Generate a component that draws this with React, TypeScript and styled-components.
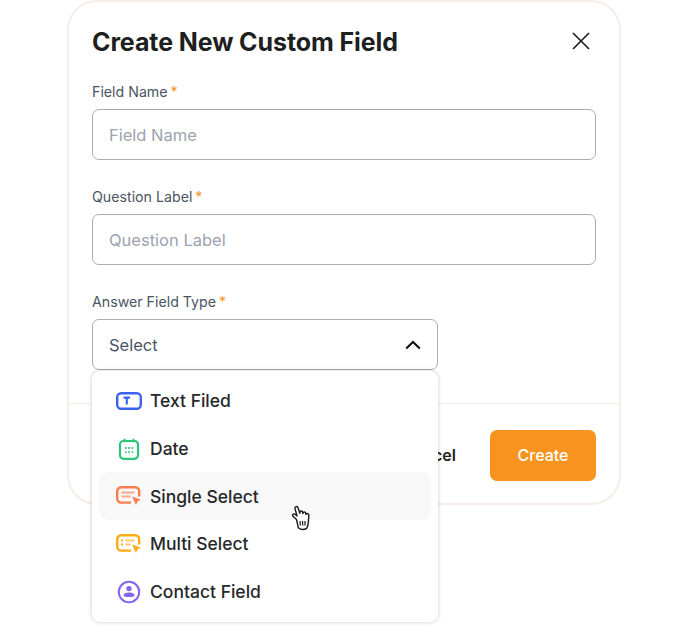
import React from 'react';
import styled, { createGlobalStyle } from 'styled-components';

const GlobalStyle = createGlobalStyle`
  html, body {
    margin: 0;
    padding: 0;
    background: #ffffff;
  }
  * {
    box-sizing: border-box;
  }
  body {
    font-family: "Inter", "Noto Sans", sans-serif;
  }
`;

const Page = styled.div`
  width: 688px;
  height: 635px;
  padding-left: 67px;
  overflow: hidden;
`;

const Modal = styled.div`
  width: 554px;
  height: 505px;
  background: #ffffff;
  border: 2px solid #f6ede5;
  border-radius: 30px;
`;

const Body = styled.div`
  padding: 0 23px 33px;
`;

const Header = styled.div`
  height: 79px;
  display: flex;
  align-items: center;
  justify-content: space-between;
`;

const Title = styled.h1`
  margin: 0;
  font-family: "Inter", sans-serif;
  font-size: 25px;
  font-weight: 700;
  letter-spacing: -0.1px;
  color: #1e1f21;
`;

const CloseButton = styled.button`
  width: 20px;
  height: 20px;
  margin: 0 5px 2px 0;
  padding: 0;
  border: none;
  background: none;
  display: flex;
`;

const Field = styled.div<{ $width?: number }>`
  position: relative;
  width: ${p => (p.$width ? `${p.$width}px` : '100%')};
  margin-bottom: 26px;

  &:last-child {
    margin-bottom: 0;
  }
`;

const Label = styled.label`
  display: block;
  height: 20px;
  margin-bottom: 8px;
  font-size: 14.2px;
  line-height: 21px;
  font-weight: 400;
  color: #4b5563;
`;

const Star = styled.span`
  margin-left: 3px;
  color: #f7931e;
`;

const Input = styled.input`
  display: block;
  width: 100%;
  height: 51px;
  padding: 0 16px;
  border: 1.5px solid #a9adb3;
  border-radius: 7px;
  font-family: inherit;
  font-size: 16.5px;
  outline: none;

  &::placeholder {
    color: #9ca3af;
  }
`;

const SelectBox = styled.div`
  height: 51px;
  padding: 0 16px;
  border: 1.5px solid #a9adb3;
  border-radius: 7px;
  display: flex;
  align-items: center;
  justify-content: space-between;
  font-size: 16.5px;
  color: #4b5563;
`;

const Menu = styled.ul`
  position: absolute;
  top: 80px;
  left: 0;
  width: 100%;
  height: 251px;
  margin: 0;
  padding: 6px 7px;
  list-style: none;
  background: #ffffff;
  border-radius: 8px;
  box-shadow: 0 0 4px rgba(0, 0, 0, 0.22);
`;

const MenuItem = styled.li<{ $active?: boolean }>`
  height: 47.7px;
  padding-left: 17px;
  display: flex;
  align-items: center;
  gap: 8px;
  border-radius: 9px;
  font-size: 17.5px;
  font-weight: 500;
  color: #26282b;
  background: ${p => (p.$active ? '#f8f8f8' : 'transparent')};
`;

const Footer = styled.div`
  padding: 26px 23px 22px;
  border-top: 1.5px solid #f6ede5;
  display: flex;
  justify-content: flex-end;
  align-items: center;
  gap: 34px;
`;

const CancelButton = styled.button`
  padding: 0 0 2px;
  border: none;
  background: none;
  font-family: inherit;
  font-size: 16px;
  font-weight: 600;
  color: #1e1f21;
`;

const CreateButton = styled.button`
  width: 106px;
  height: 51px;
  padding-bottom: 3px;
  border: none;
  border-radius: 7px;
  background: #f7931e;
  color: #ffffff;
  font-family: inherit;
  font-size: 16px;
  font-weight: 500;
`;

const Cursor = styled.svg`
  position: absolute;
  left: 199px;
  top: 134px;
`;

const TextIcon = () => (
  <svg width="26" height="18" viewBox="0 0 26 18" fill="none">
    <rect x="1.2" y="1.2" width="23.6" height="15.6" rx="4" stroke="#3b63f3" strokeWidth="2.4" />
    <path d="M7.5 5.6h6.6M10.8 5.6v7" stroke="#3b63f3" strokeWidth="2.1" />
  </svg>
);

const DateIcon = () => (
  <svg width="26" height="22" viewBox="0 0 26 22" fill="none">
    <rect x="4" y="3" width="18" height="17.8" rx="3.5" stroke="#2fc47e" strokeWidth="2.2" />
    <path d="M8.5 0.8v3.4M17.5 0.8v3.4" stroke="#2fc47e" strokeWidth="2" />
    <path d="M9 10h1.6M12.3 10h1.6M15.6 10h1.6M9 14.2h1.6M12.3 14.2h1.6M15.6 14.2h1.6" stroke="#2fc47e" strokeWidth="1.8" />
  </svg>
);

const SingleSelectIcon = () => (
  <svg width="26" height="20" viewBox="0 0 26 20" fill="none">
    <path d="M15 16.6H5.2a4 4 0 0 1-4-4V5.2a4 4 0 0 1 4-4h14a4 4 0 0 1 4 4v5.2" stroke="#fb7c4d" strokeWidth="2.4" />
    <path d="M5.5 6.500h13M5.500 10.600h9" stroke="#fca98a" strokeWidth="2" />
    <path d="M16 10.500l9 3.200-3.400 1.500-1.600 3.800z" fill="#fb7c4d" />
  </svg>
);

const MultiSelectIcon = () => (
  <svg width="26" height="20" viewBox="0 0 26 20" fill="none">
    <path d="M15 16.6H5.2a4 4 0 0 1-4-4V5.2a4 4 0 0 1 4-4h14a4 4 0 0 1 4 4v5.2" stroke="#fdab15" strokeWidth="2.4" />
    <path d="M5 6.500h2M5 10.600h2" stroke="#fdab15" strokeWidth="2" />
    <path d="M9.5 6.500h9M9.500 10.600h5" stroke="#fdc870" strokeWidth="2" />
    <path d="M16 10.500l9 3.200-3.400 1.500-1.600 3.800z" fill="#fdab15" />
  </svg>
);

const ContactIcon = () => (
  <svg width="26" height="24" viewBox="0 0 26 24" fill="none">
    <circle cx="13" cy="12" r="10.2" stroke="#8465ef" strokeWidth="2" />
    <circle cx="13" cy="8.6" r="2.7" fill="#8465ef" />
    <path d="M7.5 15.4c0-1.900 2.500-3 5.500-3s5.500 1.100 5.500 3c0 1.200-2.500 1.700-5.500 1.700s-5.500-.5-5.500-1.700z" fill="#8465ef" />
  </svg>
);

const options = [
  { name: 'Text Filed', icon: <TextIcon /> },
  { name: 'Date', icon: <DateIcon /> },
  { name: 'Single Select', icon: <SingleSelectIcon />, active: true },
  { name: 'Multi Select', icon: <MultiSelectIcon /> },
  { name: 'Contact Field', icon: <ContactIcon /> },
];

export default function App() {
  return (
    <Page>
      <GlobalStyle />
      <Modal>
        <Body>
          <Header>
            <Title>Create New Custom Field</Title>
            <CloseButton>
              <svg width="20" height="20" viewBox="0 0 20 20" fill="none">
                <path d="M2 2l16 16M18 2L2 18" stroke="#1e1f21" strokeWidth="1.7" />
              </svg>
            </CloseButton>
          </Header>
          <Field>
            <Label>Field Name<Star>*</Star></Label>
            <Input placeholder="Field Name" />
          </Field>
          <Field>
            <Label>Question Label<Star>*</Star></Label>
            <Input placeholder="Question Label" />
          </Field>
          <Field $width={346}>
            <Label>Answer Field Type<Star>*</Star></Label>
            <SelectBox>
              Select
              <svg width="16" height="10" viewBox="0 0 16 10" fill="none">
                <path d="M1.200 8.500L8 2l6.800 6.500" stroke="#111111" strokeWidth="2.200" />
              </svg>
            </SelectBox>
            <Menu>
              {options.map(option => (
                <MenuItem key={option.name} $active={option.active}>
                  {option.icon}
                  {option.name}
                </MenuItem>
              ))}
              <Cursor width="22" height="26" viewBox="0 0 22 26" fill="none">
                <path
                  d="M5.500 14.500L2 11.200c-1.200-1.300.6-3 2-1.900l2 1.700L4 3.500C3.600 1.500 6.300.7 7 2.700l1.800 5.600.2-1.300c.3-1.500 2.400-1.300 2.600.2l.3 1.300.5-.8c.7-1.200 2.400-.7 2.400.7l.1 1 .6-.5c1-.8 2.400 0 2.300 1.400l-.4 6.400c-.2 3-1 5.500-1.800 6.800-3 1.500-6.300 1.200-8.300-.8z"
                  fill="#ffffff"
                  stroke="#1a1a1a"
                  strokeWidth="1.400"
                  strokeLinejoin="round"
                />
                <path d="M9 16l.4 4.500M11.500 16l.3 4.500M14 16v4.500" stroke="#1a1a1a" strokeWidth="1.200" />
              </Cursor>
            </Menu>
          </Field>
        </Body>
        <Footer>
          <CancelButton>Cancel</CancelButton>
          <CreateButton>Create</CreateButton>
        </Footer>
      </Modal>
    </Page>
  );
}
